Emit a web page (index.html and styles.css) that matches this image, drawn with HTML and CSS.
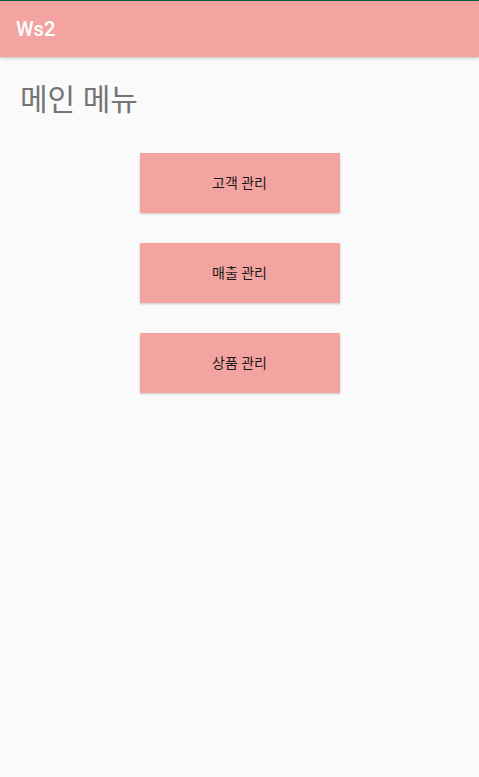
FILE: index.html
```html
<!DOCTYPE html>
<html lang="ko">
<head>
<meta charset="utf-8">
<link rel="stylesheet" href="styles.css">
</head>
<body>
<div class="status"></div>
<header class="toolbar"><span class="title">Ws2</span></header>
<main class="content">
  <h1 class="heading">메인 메뉴</h1>
  <div class="buttons">
    <button class="btn">고객 관리</button>
    <button class="btn">매출 관리</button>
    <button class="btn">상품 관리</button>
  </div>
</main>
</body>
</html>
```
FILE: styles.css
```css
html, body {
  margin: 0;
  padding: 0;
  background: #fafafa;
  font-family: Roboto, "Noto Sans CJK KR", sans-serif;
  height: 100%;
}
.status {
  height: 1px;
  background: #00574b;
}
.toolbar {
  height: 56px;
  background: #f4a4a0;
  display: flex;
  align-items: center;
  padding-left: 16px;
  box-shadow: 0 1px 3px rgba(0,0,0,0.25);
  position: relative;
}
.title {
  color: #fff;
  font-size: 20px;
  font-weight: 500;
}
.content {
  padding: 0 20px;
}
.heading {
  margin: 24px 0 0;
  font-size: 30px;
  font-weight: 400;
  color: #757575;
  line-height: 38px;
}
.buttons {
  display: flex;
  flex-direction: column;
  align-items: center;
  gap: 30px;
  margin-top: 34px;
}
.btn {
  width: 200px;
  height: 60px;
  border: none;
  background: #f4a4a0;
  font-family: Roboto, "Noto Sans CJK KR", sans-serif;
  font-size: 14px;
  color: #1a1a1a;
  box-shadow: 0 1px 2px rgba(0,0,0,0.2);
  padding: 0 0 2px;
}
```
